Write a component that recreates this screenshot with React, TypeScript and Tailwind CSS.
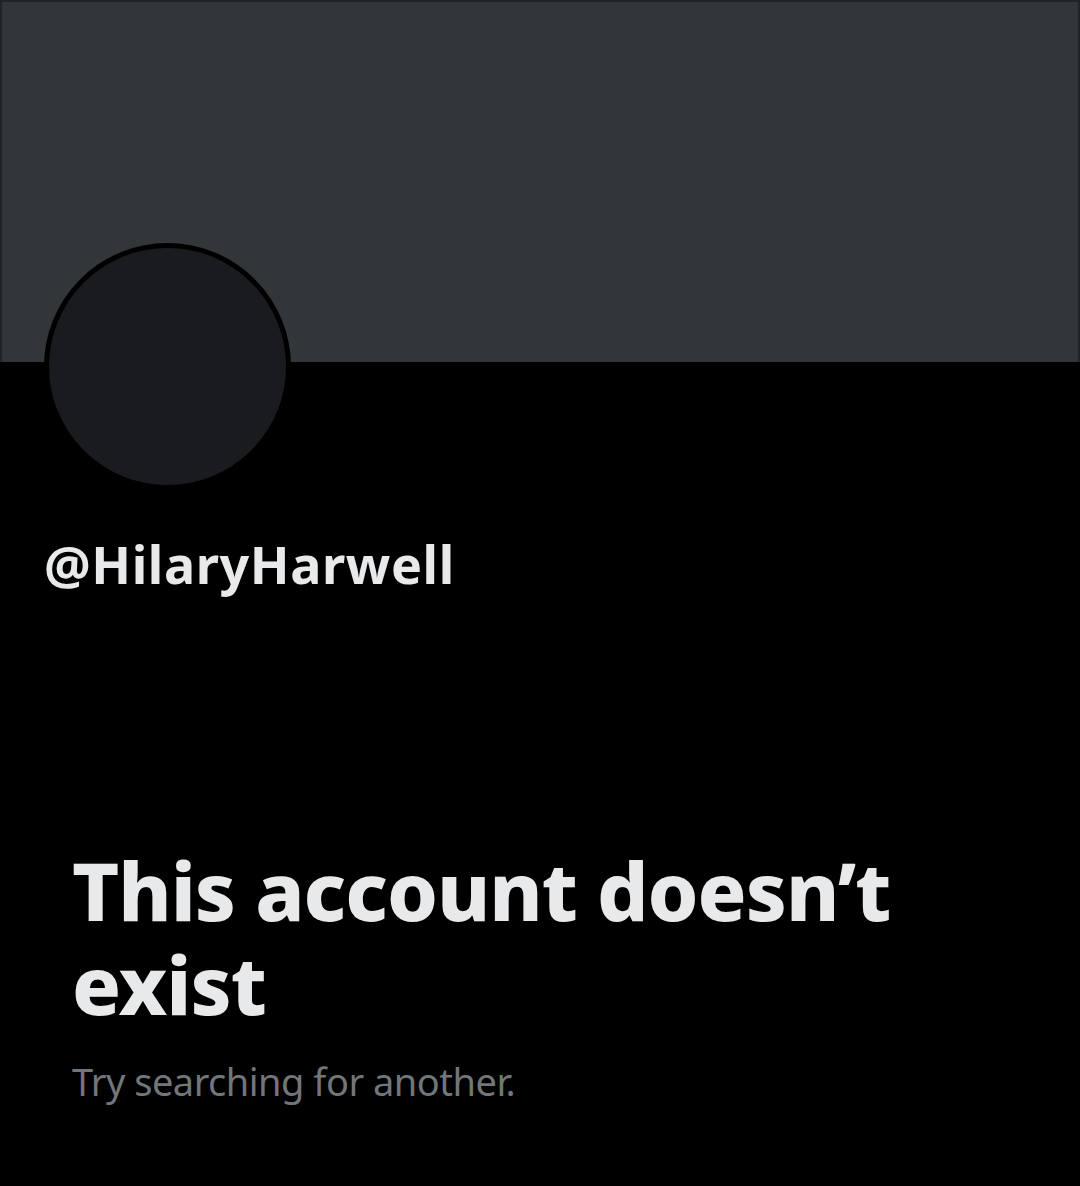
export default function App() {
  return (
    <div
      className="min-h-[1186px] w-full bg-black text-[#e7e9ea]"
      style={{ fontFamily: '"Noto Sans", "Liberation Sans", sans-serif' }}
    >
      {/* banner */}
      <div className="h-[362px] border-x-2 border-t-2 border-[#202327] bg-[#333639]" />

      <div className="px-[44px]">
        <div className="mt-[-119px] h-[247px] w-[247px] rounded-full border-[5px] border-black bg-[#1a1b1e]" />
        <div className="mt-[42px] text-[52px] font-bold leading-[63px] tracking-[0.6px]">
          @HilaryHarwell
        </div>
      </div>

      <div className="mt-[248px] px-[72px]">
        <h1 className="text-[81px] font-extrabold leading-[94px] tracking-[-1px]">
          This account doesn’t exist
        </h1>
        <p className="mt-[24px] text-[38px] leading-[52px] tracking-[-0.5px] text-[#71767b]">
          Try searching for another.
        </p>
      </div>
    </div>
  );
}
